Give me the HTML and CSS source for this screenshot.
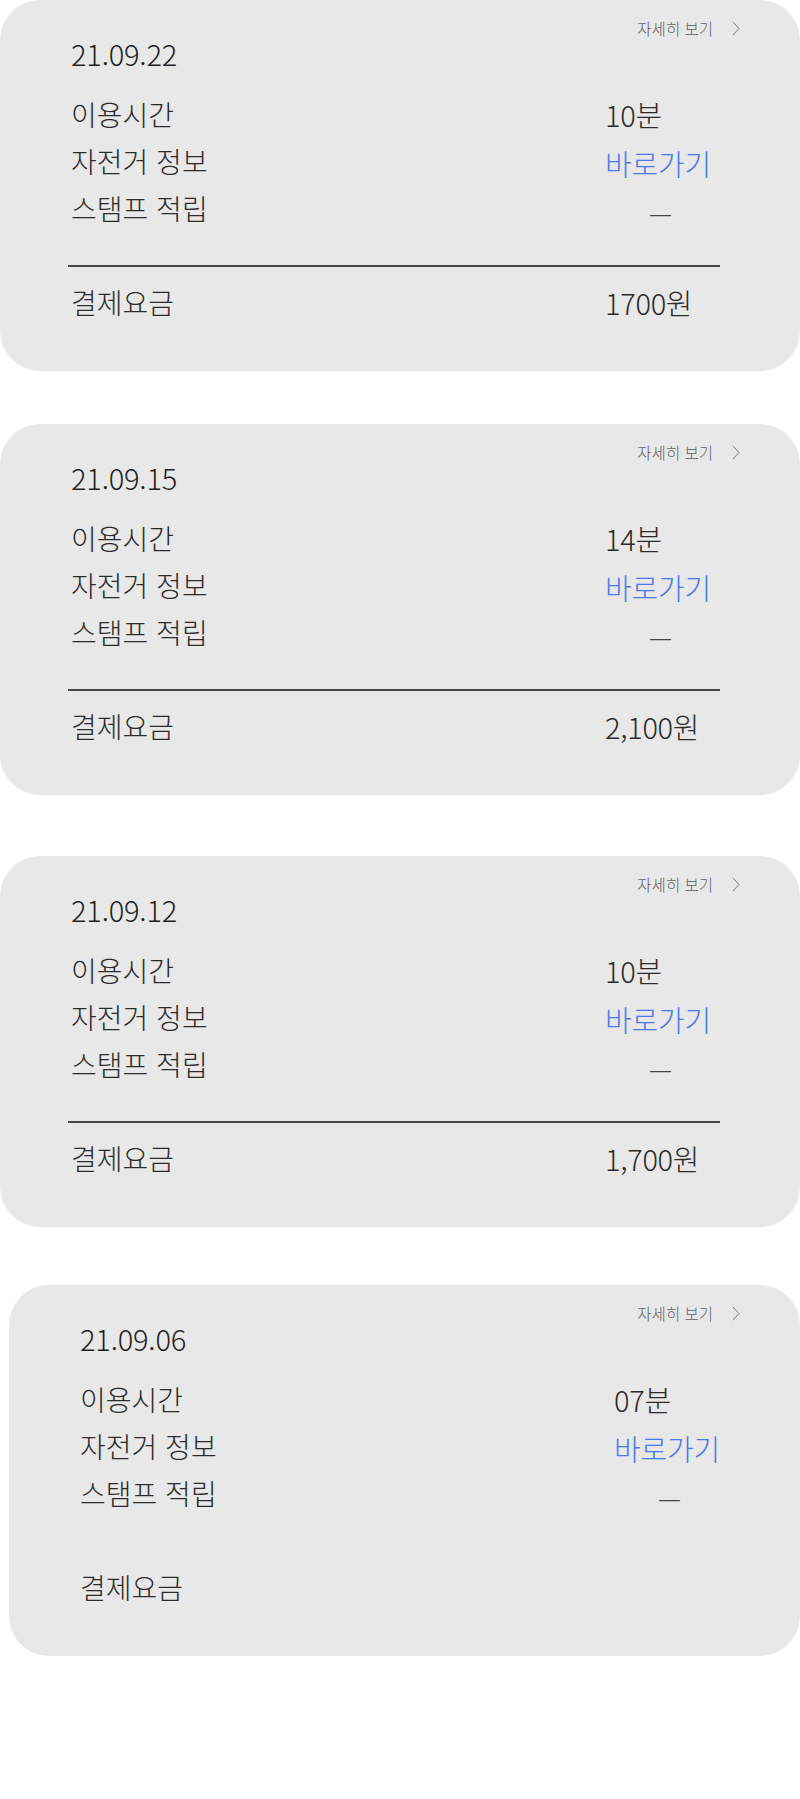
FILE: index.html
```html
<!DOCTYPE html>
<html lang="ko">
<head>
<meta charset="utf-8">
<title>이용내역</title>
<link rel="stylesheet" href="styles.css">
</head>
<body>
<main class="list">
  <section class="card card--first">
    <div class="card__head"><span class="more">자세히 보기</span><svg class="chev" width="8" height="15" viewBox="0 0 8 15"><path d="M0.8 0.8 L7 7.5 L0.8 14.2" fill="none" stroke="#7a7a7a" stroke-width="1"/></svg></div>
    <div class="date">21.09.22</div>
    <div class="rows rows--info">
      <div class="label">이용시간</div><div class="value">10분</div>
      <div class="label">자전거 정보</div><div class="value link">바로가기</div>
      <div class="label">스탬프 적립</div><div class="value dash">—</div>
    </div>
    <hr class="divider">
    <div class="rows">
      <div class="label">결제요금</div><div class="value">1700원</div>
    </div>
  </section>

  <section class="card card--second">
    <div class="card__head"><span class="more">자세히 보기</span><svg class="chev" width="8" height="15" viewBox="0 0 8 15"><path d="M0.8 0.8 L7 7.5 L0.8 14.2" fill="none" stroke="#7a7a7a" stroke-width="1"/></svg></div>
    <div class="date">21.09.15</div>
    <div class="rows rows--info">
      <div class="label">이용시간</div><div class="value">14분</div>
      <div class="label">자전거 정보</div><div class="value link">바로가기</div>
      <div class="label">스탬프 적립</div><div class="value dash">—</div>
    </div>
    <hr class="divider">
    <div class="rows">
      <div class="label">결제요금</div><div class="value">2,100원</div>
    </div>
  </section>

  <section class="card card--third">
    <div class="card__head"><span class="more">자세히 보기</span><svg class="chev" width="8" height="15" viewBox="0 0 8 15"><path d="M0.8 0.8 L7 7.5 L0.8 14.2" fill="none" stroke="#7a7a7a" stroke-width="1"/></svg></div>
    <div class="date">21.09.12</div>
    <div class="rows rows--info">
      <div class="label">이용시간</div><div class="value">10분</div>
      <div class="label">자전거 정보</div><div class="value link">바로가기</div>
      <div class="label">스탬프 적립</div><div class="value dash">—</div>
    </div>
    <hr class="divider">
    <div class="rows">
      <div class="label">결제요금</div><div class="value">1,700원</div>
    </div>
  </section>

  <section class="card card--fourth">
    <div class="card__head"><span class="more">자세히 보기</span><svg class="chev" width="8" height="15" viewBox="0 0 8 15"><path d="M0.8 0.8 L7 7.5 L0.8 14.2" fill="none" stroke="#7a7a7a" stroke-width="1"/></svg></div>
    <div class="date">21.09.06</div>
    <div class="rows rows--info">
      <div class="label">이용시간</div><div class="value">07분</div>
      <div class="label">자전거 정보</div><div class="value link">바로가기</div>
      <div class="label">스탬프 적립</div><div class="value dash">—</div>
    </div>
    <hr class="divider divider--none">
    <div class="rows">
      <div class="label">결제요금</div><div class="value"></div>
    </div>
  </section>
</main>
</body>
</html>
```

FILE: styles.css
```css
* { box-sizing: border-box; }
html, body {
  margin: 0;
  padding: 0;
  background: #ffffff;
}
body {
  font-family: "Noto Sans CJK KR", "Noto Sans", sans-serif;
  font-weight: 300;
  color: #2b2b2b;
  width: 800px;
  height: 1799px;
  overflow: hidden;
}
.list {
  display: flex;
  flex-direction: column;
}
.card {
  background: #e8e8e8;
  border-radius: 40px;
  height: 371px;
  padding: 20px 0 0 71px;
  display: flex;
  flex-direction: column;
}
.card--first { margin-top: 0; }
.card--second { margin-top: 53px; }
.card--third { margin-top: 61px; }
.card--fourth { margin-top: 58px; margin-left: 9px; }

.card__head {
  display: flex;
  justify-content: flex-end;
  align-items: center;
  height: 16px;
  padding-right: 60px;
  gap: 19px;
}
.more {
  font-size: 15.5px;
  line-height: 16px;
  color: #5e5e5e;
}
.chev { display: block; }

.date {
  margin-top: -1px;
  font-size: 29px;
  line-height: 36px;
  color: #1f1f1f;
  letter-spacing: -0.2px;
}
.rows {
  display: grid;
  grid-template-columns: 534px auto;
  grid-auto-rows: 47px;
  align-items: center;
}
.rows--info { margin-top: 20px; }
.label {
  font-size: 28px;
  line-height: 47px;
}
.value {
  font-size: 29px;
  line-height: 47px;
  letter-spacing: -0.3px;
}
.link {
  color: #4a78f0;
  font-size: 29px;
  letter-spacing: -0.2px;
  padding-top: 3px;
}
.dash {
  font-size: 26px;
  padding-left: 44px;
  padding-top: 6px;
  color: #444;
}
.divider {
  margin: 33px 0 12px -3px;
  width: 652px;
  height: 0;
  border: 0;
  border-top: 2px solid #474747;
}
.divider--none { border-top-color: transparent; }
```
